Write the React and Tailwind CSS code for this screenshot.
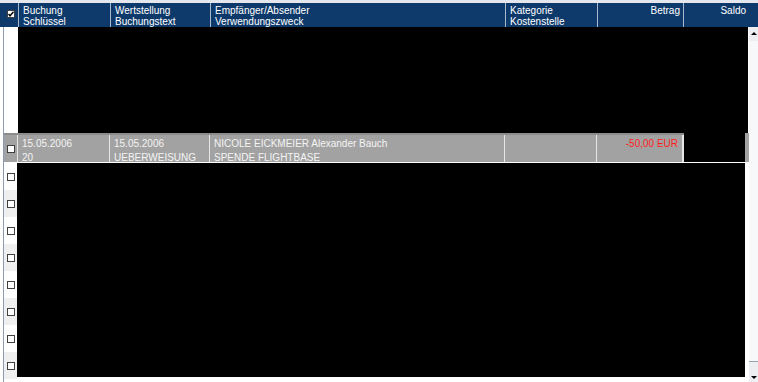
import React from "react";

const cols = [
  { w: "w-[92px]", top: "Buchung", bottom: "Schlüssel" },
  { w: "w-[100px]", top: "Wertstellung", bottom: "Buchungstext" },
  { w: "w-[295px]", top: "Empfänger/Absender", bottom: "Verwendungszweck" },
  { w: "w-[92px]", top: "Kategorie", bottom: "Kostenstelle" },
  { w: "w-[86px]", top: "Betrag", right: true },
  { w: "w-[66px]", top: "Saldo", right: true },
];

const selected = [
  { w: "w-[92px]", top: "15.05.2006", bottom: "20" },
  { w: "w-[100px]", top: "15.05.2006", bottom: "UEBERWEISUNG" },
  { w: "w-[295px]", top: "NICOLE EICKMEIER Alexander Bauch", bottom: "SPENDE FLIGHTBASE" },
  { w: "w-[92px]", top: "", bottom: "" },
  { w: "w-[86px]", top: "-50,00 EUR", red: true },
];

function Box({ checked }) {
  return (
    <div className="w-[8px] h-[8px] border border-[#404040] bg-white flex items-center justify-center">
      {checked && (
        <svg width="6" height="6" viewBox="0 0 6 6">
          <path d="M0.5 3 L2 4.8 L5.5 0.8" stroke="#000" strokeWidth="1.4" fill="none" />
        </svg>
      )}
    </div>
  );
}

export default function App() {
  const lower = [0, 1, 2, 3, 4, 5, 6, 7];
  return (
    <div
      className="w-[758px] h-[382px] bg-white overflow-hidden flex flex-col text-[10px] leading-[11px]"
      style={{ fontFamily: '"Liberation Sans", Arial, sans-serif' }}
    >
      <div className="h-[3px] bg-[#e4e8ee] shrink-0" />
      {/* header */}
      <div className="h-[24px] shrink-0 flex bg-[#0e3a6b] text-white">
        <div className="w-[18px] flex items-center justify-end pr-[3px] pb-[2px]">
          <Box checked />
        </div>
        {cols.map((c) => (
          <div
            key={c.top}
            className={`${c.w} border-l border-[#a9b9cc] pl-[4px] pr-[3px] pt-[2px] flex flex-col ${c.right ? "items-end" : ""}`}
          >
            <span>{c.top}</span>
            {c.bottom && <span>{c.bottom}</span>}
          </div>
        ))}
      </div>

      <div className="flex flex-1 min-h-0">
        <div className="w-[3px] bg-white" />
        <div className="w-[1px] bg-[#8d9bb0]" />
        <div className="flex-1 flex flex-col">
          {/* upper rows (redacted) */}
          <div className="h-[106px] flex shrink-0">
            <div className="w-[14px] bg-white" />
            <div className="flex-1 bg-black" />
            <div className="w-[1px] bg-white" />
          </div>
          {/* selected row */}
          <div className="h-[30px] flex shrink-0 border-b border-white">
            <div className="w-[680px] flex bg-[#a2a2a2] text-[#f4f4f4] border-t-2 border-[#8c8c8c]">
              <div className="w-[13px] flex items-center justify-center">
                <Box />
              </div>
              {selected.map((c, i) => (
                <div
                  key={i}
                  className={`${c.w} border-l border-[#e6e6e6] pl-[4px] pr-[4px] pt-[3px] flex flex-col gap-[3px] ${c.red ? "items-end text-[#ff1e1e]" : ""}`}
                >
                  <span>{c.top}</span>
                  {c.bottom !== undefined && <span>{c.bottom}</span>}
                </div>
              ))}
              <div className="w-[2px] bg-[#e6e6e6]" />
            </div>
            <div className="flex-1 bg-black" />
            <div className="w-[4px] bg-[#a2a2a2]" />
          </div>
          {/* lower rows */}
          <div className="flex flex-1 min-h-0">
            <div className="w-[13px] flex flex-col">
              {lower.map((r) => (
                <div
                  key={r}
                  className={`h-[27px] shrink-0 flex items-center justify-center ${r % 2 ? "bg-[#efefef]" : "bg-white"}`}
                >
                  <Box />
                </div>
              ))}
            </div>
            <div className="flex-1 flex flex-col">
              <div className="h-[214px] bg-black" />
            </div>
            <div className="w-[4px] bg-white" />
          </div>
        </div>
        {/* scrollbar */}
        <div className="w-[9px] bg-[#eceef2] flex flex-col items-center">
          <div className="h-[12px] flex items-center justify-center">
            <div className="w-0 h-0 border-l-[3px] border-r-[3px] border-b-[3px] border-l-transparent border-r-transparent border-b-black" />
          </div>
          <div className="w-full flex-1 flex flex-col pt-[2px] pb-[10px]">
            <div className="flex-1 bg-[#f7f8fa]" />
            <div className="h-[1px] bg-[#9aa3b0]" />
          </div>
          <div className="h-[10px] flex items-center justify-center">
            <div className="w-0 h-0 border-l-[3px] border-r-[3px] border-t-[3px] border-l-transparent border-r-transparent border-t-black" />
          </div>
        </div>
      </div>
    </div>
  );
}
